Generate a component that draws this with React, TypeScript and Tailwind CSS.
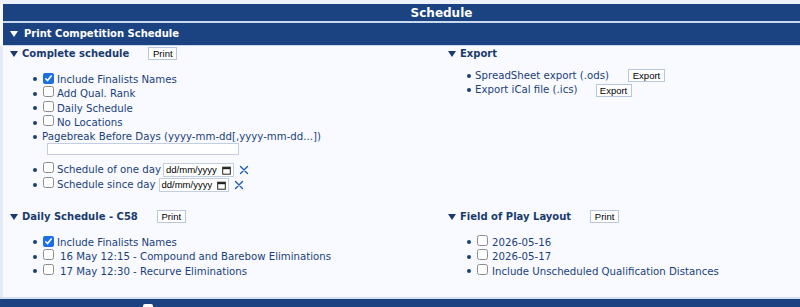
import React from "react";

const Tri = () => (
  <svg width="8" height="6" viewBox="0 0 8 6" className="shrink-0">
    <path d="M0 0 L8 0 L4 6 Z" fill="currentColor" />
  </svg>
);

const Box = ({ checked }: { checked?: boolean }) =>
  checked ? (
    <span className="inline-flex items-center justify-center w-[11px] h-[11px] rounded-[2px] bg-[#1a6ee8] shrink-0">
      <svg width="9" height="9" viewBox="0 0 9 9">
        <path d="M1.8 4.8 L3.6 6.6 L7.2 2" stroke="white" strokeWidth="1.6" fill="none" strokeLinecap="round" strokeLinejoin="round" />
      </svg>
    </span>
  ) : (
    <span className="inline-block w-[11px] h-[11px] rounded-[2.5px] border border-[#8c8c8c] bg-white shrink-0" />
  );

const Btn = ({ children, cls }: { children: React.ReactNode; cls: string }) => (
  <span
    className={`inline-flex items-center justify-center h-[13px] bg-white border border-[#b9c7de] text-black text-[9.5px] font-['Liberation_Sans',sans-serif] leading-none ${cls}`}
  >
    {children}
  </span>
);

const Bullet = () => (
  <span className="w-[4px] h-[4px] rounded-full bg-[#1b3f7a] shrink-0" />
);

const Item = ({
  checked,
  label,
  h = "h-[14.5px]",
  children,
  gap = "ml-[3px]",
}: {
  checked?: boolean;
  label: string;
  h?: string;
  children?: React.ReactNode;
  gap?: string;
}) => (
  <div className={`flex items-center ${h}`}>
    <Bullet />
    <span className="ml-[6px]">
      <Box checked={checked} />
    </span>
    <span className={`${gap} whitespace-nowrap`}>{label}</span>
    {children}
  </div>
);

const Header = ({ title, btn, btnCls }: { title: string; btn?: string; btnCls?: string }) => (
  <div className="flex items-center h-[13px] text-[#1a3a6e]">
    <Tri />
    <span className="ml-[4px] font-bold text-[10px] whitespace-nowrap">{title}</span>
    {btn && <Btn cls={btnCls || ""}>{btn}</Btn>}
  </div>
);

const DateBox = ({ w }: { w: string }) => (
  <span
    className={`inline-flex items-center justify-between h-[14px] ${w} bg-white border border-[#c3cee0] px-[2px] text-black text-[9.5px] font-['Liberation_Sans',sans-serif] leading-none`}
  >
    <span>dd/mm/yyyy</span>
    <svg width="9" height="9" viewBox="0 0 9 9">
      <rect x="0.7" y="1.2" width="7.6" height="7" fill="none" stroke="#222" strokeWidth="1" />
      <rect x="0.7" y="1.2" width="7.6" height="2" fill="#222" />
    </svg>
  </span>
);

const X = ({ cls }: { cls: string }) => (
  <svg width="10" height="10" viewBox="0 0 10 10" className={cls}>
    <path d="M1.5 1.5 L8.5 8.5 M8.5 1.5 L1.5 8.5" stroke="#1d5bb5" strokeWidth="1.4" strokeLinecap="round" />
  </svg>
);

export default function App() {
  return (
    <div className="w-[800px] h-[307px] overflow-hidden bg-[#f8faff] font-['DejaVu_Sans',sans-serif] text-[10.2px] text-[#1b3f7a]">
      <div className="h-[4px] bg-[#eef3fb]" />
      <div className="ml-[3px]">
        <div className="h-[17px] bg-[#1b4382] flex items-center justify-center pl-[80px] text-white font-bold text-[12px] leading-none pt-[1px]">
          Schedule
        </div>
        <div className="h-[2px] bg-[#c9d8ee]" />
        <div className="h-[22px] bg-[#1b4382] flex items-center pl-[7px] text-white font-bold text-[10px] leading-none">
          <span className="text-white"><Tri /></span>
          <span className="ml-[6px]">Print Competition Schedule</span>
        </div>
        <div className="h-[1px] bg-[#c9d8ee]" />
      </div>
      <div className="flex">
        <div className="w-[3px] bg-[#e2eaf7] h-[251px] shrink-0" />
        <div className="flex flex-col">
          {/* Row 1 */}
          <div className="flex h-[157px] pt-[1px]">
            <div className="w-[435px] pl-[7px]">
              <Header title="Complete schedule" btn="Print" btnCls="ml-[19px] w-[29px]" />
              <div className="mt-[12px] pl-[23px]">
                <Item checked label="Include Finalists Names" />
                <Item label="Add Qual. Rank" />
                <Item label="Daily Schedule" />
                <Item label="No Locations" />
                <div className="flex items-center h-[13px]">
                  <Bullet />
                  <span className="ml-[5px] whitespace-nowrap">Pagebreak Before Days (yyyy-mm-dd[,yyyy-mm-dd...])</span>
                </div>
                <div className="ml-[14px] h-[12px] w-[192px] bg-white border border-[#c3cee0]" />
                <div className="mt-[8px]">
                  <Item label="Schedule of one day" h="h-[14px]">
                    <span className="ml-[2px]"><DateBox w="w-[71px]" /></span>
                    <X cls="ml-[5px]" />
                  </Item>
                  <div className="h-[1px]" />
                  <Item label="Schedule since day" h="h-[14px]">
                    <span className="ml-[3px]"><DateBox w="w-[70px]" /></span>
                    <X cls="ml-[5px]" />
                  </Item>
                </div>
              </div>
            </div>
            <div className="pl-[10px]">
              <Header title="Export" />
              <div className="mt-[9px] pl-[19px]">
                <div className="flex items-center h-[14px]">
                  <Bullet />
                  <span className="ml-[4px] whitespace-nowrap">SpreadSheet export (.ods)</span>
                  <span className="ml-[19px] -mt-[1px]"><Btn cls="w-[37px]">Export</Btn></span>
                </div>
                <div className="flex items-center h-[14px]">
                  <Bullet />
                  <span className="ml-[4px] whitespace-nowrap">Export iCal file (.ics)</span>
                  <span className="ml-[18px] mt-[1px]"><Btn cls="w-[36px]">Export</Btn></span>
                </div>
              </div>
            </div>
          </div>
          {/* Row 2 */}
          <div className="flex h-[94px] pt-[7px]">
            <div className="w-[435px] pl-[7px]">
              <Header title="Daily Schedule - C58" btn="Print" btnCls="ml-[19px] w-[29px]" />
              <div className="mt-[12px] pl-[23px]">
                <Item checked label="Include Finalists Names" />
                <Item label="16 May 12:15 - Compound and Barebow Eliminations" gap="ml-[6px]" />
                <Item label="17 May 12:30 - Recurve Eliminations" gap="ml-[6px]" />
              </div>
            </div>
            <div className="pl-[10px]">
              <Header title="Field of Play Layout" btn="Print" btnCls="ml-[19px] w-[29px]" />
              <div className="mt-[12px] pl-[19px]">
                <Item label="2026-05-16" gap="ml-[4px]" />
                <Item label="2026-05-17" gap="ml-[4px]" />
                <Item label="Include Unscheduled Qualification Distances" gap="ml-[4px]" />
              </div>
            </div>
          </div>
        </div>
      </div>
      <div className="h-[2px] bg-[#d3e0f3]" />
      <div className="h-[8px] bg-[#1b4382] relative">
        <span className="absolute left-[143px] top-[5px] w-[10px] h-[10px] bg-white rounded-[2px]" />
      </div>
    </div>
  );
}
